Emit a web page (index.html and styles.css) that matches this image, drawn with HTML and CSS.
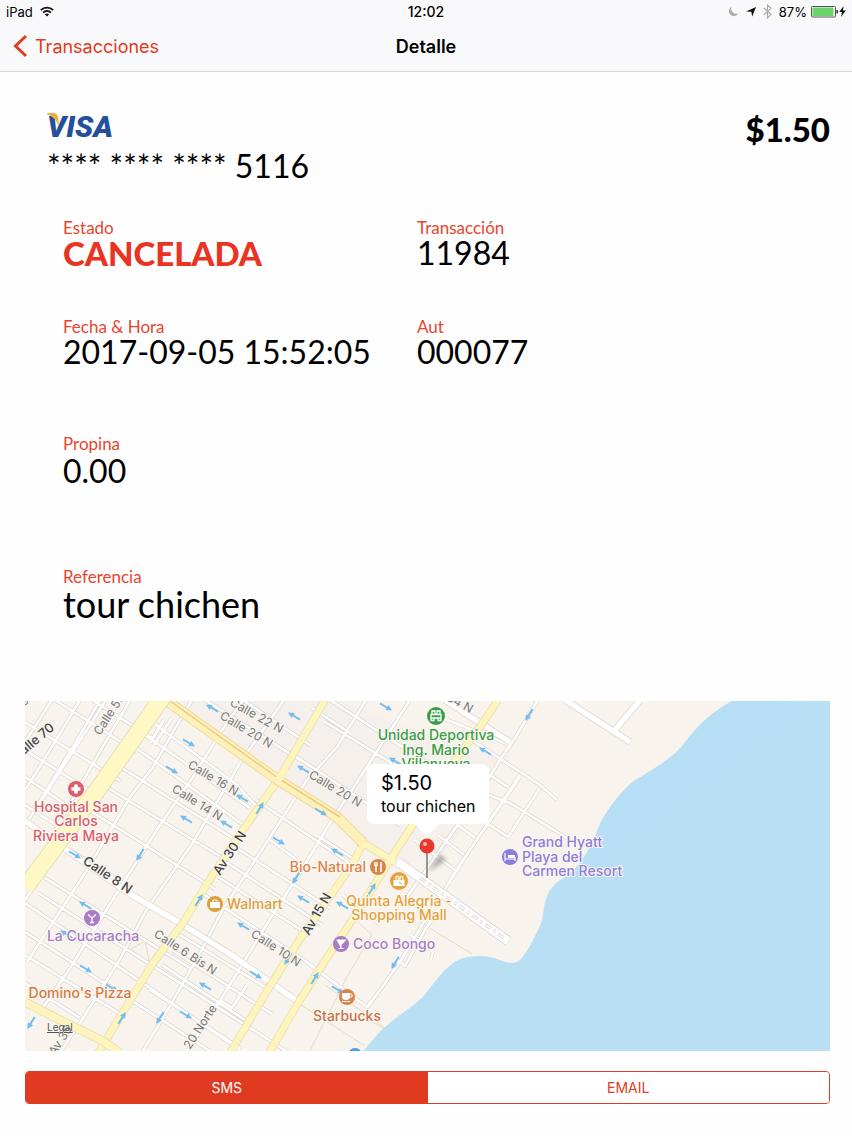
FILE: index.html
```html
<!DOCTYPE html>
<html lang="es">
<head>
<meta charset="utf-8">
<meta name="viewport" content="width=device-width, initial-scale=1">
<title>Detalle</title>
<link rel="stylesheet" href="styles.css">
</head>
<body>
<header class="top">
  <div class="status">
    <div class="status-left">
      <span>iPad</span>
      <svg width="14" height="11" viewBox="0 0 14 11" aria-hidden="true"><g fill="none" stroke="#111" stroke-width="1.8"><path d="M.8 4.2C4.300.700 9.700.700 13.200 4.200"/><path d="M3.100 6.600C5.400 4.400 8.600 4.400 10.900 6.600"/></g><path d="M4.800 8.300C6.200 7.100 7.800 7.100 9.200 8.300L7 10.600Z" fill="#111"/></svg>
    </div>
    <span class="clock">12:02</span>
    <div class="status-right">
      <svg width="11" height="11" viewBox="0 0 11 11" aria-hidden="true"><path d="M3.500.800A5 5 0 1 0 10.300 7.600A5.300 5.300 0 0 1 3.500.800Z" fill="#aaa"/></svg>
      <svg class="gap-l" width="10" height="10" viewBox="0 0 10 10" aria-hidden="true"><path d="M10 0L6.200 9.600L5.300 4.800L0 4.400Z" fill="#111"/></svg>
      <svg class="gap-l" width="9" height="15" viewBox="0 0 9 15" aria-hidden="true"><path d="M.8 4L8 10.500L4.500 14V1L8 4.300L.8 11" fill="none" stroke="#aaa" stroke-width="1.100"/></svg>
      <span class="gap-l">87%</span>
      <svg class="gap-s" width="28" height="12" viewBox="0 0 28 12" aria-hidden="true"><rect x=".5" y=".5" width="24" height="10.500" rx="1" fill="#fff" stroke="#555"/><rect x="1.500" y="1.500" width="21" height="8.500" fill="#6bd56b"/><path d="M25.500 4H26.500Q27.500 5.800 26.500 7.500H25.500Z" fill="#111"/></svg>
      <svg width="7" height="11" viewBox="0 0 7 11" aria-hidden="true"><path d="M4.600 0L.2 6H3L2 11L6.800 4.500H3.900Z" fill="#111"/></svg>
    </div>
  </div>
  <nav class="nav">
    <a class="back" href="#"><svg width="15" height="24" viewBox="0 0 15 24" aria-hidden="true"><path d="M13 2L2.500 12L13 22" fill="none" stroke="#e03c20" stroke-width="3"/></svg>Transacciones</a>
    <h1 class="title">Detalle</h1>
  </nav>
</header>

<main class="page">
  <section class="payment">
    <div>
      <svg class="visa" width="72" height="32" viewBox="0 0 72 32" role="img" aria-label="VISA"><text class="visa-text" x="0" y="27">VISA</text><path d="M0 3H6Q10 3 11 7L12 16Q8 7 0 4Z" fill="#efad3b"/></svg>
      <p class="card-number">**** **** **** 5116</p>
    </div>
    <p class="amount">$1.50</p>
  </section>

  <dl class="details">
    <div><dt>Estado</dt><dd class="cancelled">CANCELADA</dd></div>
    <div><dt>Transacción</dt><dd>11984</dd></div>
    <div><dt>Fecha &amp; Hora</dt><dd>2017-09-05 15:52:05</dd></div>
    <div><dt>Aut</dt><dd>000077</dd></div>
    <div class="wide"><dt>Propina</dt><dd>0.00</dd></div>
    <div class="wide"><dt>Referencia</dt><dd class="reference">tour chichen</dd></div>
  </dl>

  <svg class="map" viewBox="25 701 805 350" preserveAspectRatio="xMidYMid slice" role="img" aria-label="Mapa de Playa del Carmen">
    <defs>
      <linearGradient id="sea" x1="0" y1="0" x2="1" y2="1"><stop offset="0" stop-color="#a9dbf3"/><stop offset=".5" stop-color="#b9dff5"/></linearGradient>
      <filter id="soft" x="-50%" y="-50%" width="200%" height="200%"><feGaussianBlur stdDeviation="2"/></filter>
      <path id="streets" d="
        M27 823L83 730L100 700 M25 790L50 750L80 700 M55 830L95 760L130 700 M38 806L106 700 M25 742L52 700
        M27 962L87 870L130 797L153 767L180 720L192 700
        M40 1012L70 968L120 888L160 825L193 777L220 733L243 700
        M63 1048L80 1023L120 959L147 909L190 847L220 797L240 763L284 700
        M154 745L172 718
        M143 1051L170 1006L200 953L223 909L250 868L307 780L337 747L366 700
        M187 1051L223 996L270 919L297 877L330 823L367 767L410 700
        M220 1000L232 1008L247 985
        M25 900L45 870
        M25 722L120 781 M25 750L103 799 M25 777L88 820 M25 805L72 835 M55 700L137 752 M92 700L152 738
        M152 722L236 784L258 808 M145 735L250 808 M136 748L245 826 M122 768L236 840 M108 788L226 860
        M150 743L164 720 M92 812L215 889 M70 850L128 886 M45 878L190 968 M38 893L172 978 L300 1060
        M25 903L150 988L240 1050 M25 932L140 1006L210 1051 M25 955L125 1017 M25 983L80 1018
        M165 700L195 718 M205 700L300 760 M243 700L310 745 M325 722L435 790 M330 700L430 765 M292 754L400 825
        M312 708L350 733 M256 800L354 866 M232 845L330 908 M226 862L322 925 M218 877L309 935
        M200 892L304 960L367 1007 M180 935L270 990 M172 950L250 1000L272 1014 M162 965L245 1020 M150 990L240 1048
        M270 840L297 860 M318 836L360 863 M343 895L380 925
        M367 1008L400 962L425 920L470 850L520 775 M310 965L367 1007L371 1001
        M395 958L405 966L425 930L433 918 M410 935L433 952L431 959
        M538 700L515 738L500 760L475 800L440 850L405 900
        M520 777L463 860L450 880 M540 788L508 837L485 822 M440 717L510 745
        M472 740L540 785L557 800 M490 775L508 787 M480 792L510 803L570 840 M458 825L475 838 M438 835L464 855 M415 840L455 870"/>
      <path id="avenues" d="M25 821L130 894L180 923L230 954L300 1003 M445 700L480 723L510 742 M565 700L630 742 M615 730L640 700"/>
      <path id="pier" d="M398 862L508 941" />
      <path id="yellow" d="M325 700L278 780L245 827L212 876L183 923L153 963L98 1053 M363 843L352 865L300 939L270 986L230 1053 M498 700L480 727L453 763L390 860L353 919L330 953L298 1003L269 1053 M337 817L363 843L395 862"/>
      <path id="arrow" d="M-7 -1H1V-3L7 0L1 3V1H-7Z"/>
    </defs>
    <rect x="25" y="701" width="805" height="350" fill="#f8f4ed"/>
    <path d="M170 701L340 701L500 760L450 850L390 870L278 780Z" fill="#f5f0eb"/>
    <g fill="none" stroke-linejoin="round">
      <path d="M420 922L472 954 M355 919L372 935L348 975L310 1051 M325 985L395 1035L360 1015 M298 1003L365 1046 M124 953L145 941L150 965" stroke="#e3dbc5" stroke-width="1"/>
      <use href="#streets" stroke="#dcd6d0" stroke-width="4"/>
      <use href="#streets" stroke="#fff" stroke-width="2.500"/>
      <use href="#avenues" stroke="#dcd6d0" stroke-width="7"/>
      <use href="#avenues" stroke="#fff" stroke-width="5.500"/>
      <use href="#pier" stroke="#d2cdc8" stroke-width="10"/>
      <use href="#pier" stroke="#fff" stroke-width="8.500"/>
      <path d="M420 878L504 938" stroke="#d2cdc8" stroke-width="3" stroke-dasharray="7 3 3 3"/>
      <path d="M420 878L504 938" stroke="#fff" stroke-width="1.500" stroke-dasharray="7 3 3 3"/>
      <use href="#yellow" stroke="#e8dcae" stroke-width="8"/>
      <use href="#yellow" stroke="#fdf5bd" stroke-width="6.500"/>
      <path d="M25 1002L60 1020L103 1041L120 1053" stroke="#e8dcae" stroke-width="9"/>
      <path d="M25 1002L60 1020L103 1041L120 1053" stroke="#fdf5bd" stroke-width="7.500"/>
      <path d="M167 701L278 780L337 817L363 843" stroke="#efd9a7" stroke-width="11"/>
      <path d="M167 701L278 780L337 817L363 843" stroke="#fcf1b8" stroke-width="9"/>
      <path d="M170 701L278 778L340 817" stroke="#f1c984" stroke-width="1.500"/>
      <path d="M164 695L101 785L25 888" stroke="#e8dfb4" stroke-width="18"/>
      <path d="M164 695L101 785L25 888" stroke="#fdf8c4" stroke-width="16"/>
      <path d="M278 780L286 768" stroke="#fdf5bd" stroke-width="7"/>
    </g>
    <path d="M732 701C710 713 698 725 682 746C665 765 642 774 629 785C613 800 600 820 596 834C590 850 578 868 565 877C556 882 549 889 547 897C543 905 544 915 541 923C535 938 526 953 521 959C516 965 506 963 500 960C489 955 475 955 463 958C446 964 437 980 423 997C410 1009 394 1018 384 1028C374 1037 369 1045 363 1051H830V701Z" fill="url(#sea)"/>
    <circle cx="355" cy="1055" r="7" fill="#4b9fe0"/>

    <g fill="#74bdee">
      <use href="#arrow" transform="translate(212 708) rotate(211)"/><use href="#arrow" transform="translate(189 743) rotate(31)"/><use href="#arrow" transform="translate(172 770) rotate(31)"/><use href="#arrow" transform="translate(186 819) rotate(211)"/><use href="#arrow" transform="translate(226 824) rotate(211)"/><use href="#arrow" transform="translate(140 855) rotate(122)"/><use href="#arrow" transform="translate(75 855) rotate(31)"/>
      <use href="#arrow" transform="translate(294 716) rotate(211)"/><use href="#arrow" transform="translate(386 707) rotate(31)"/><use href="#arrow" transform="translate(303 769) rotate(211)"/><use href="#arrow" transform="translate(242 798) rotate(211)"/><use href="#arrow" transform="translate(260 808) rotate(-58)"/><use href="#arrow" transform="translate(321 812) rotate(31)"/><use href="#arrow" transform="translate(279 841) rotate(31)"/><use href="#arrow" transform="translate(337 852) rotate(211)"/><use href="#arrow" transform="translate(395 761) rotate(211)"/><use href="#arrow" transform="translate(529 715) rotate(122)"/><use href="#arrow" transform="translate(485 751) rotate(211)"/>
      <use href="#arrow" transform="translate(85 905) rotate(211)"/><use href="#arrow" transform="translate(66 934) rotate(211)"/><use href="#arrow" transform="translate(86 969) rotate(31)"/><use href="#arrow" transform="translate(112 988) rotate(31)"/><use href="#arrow" transform="translate(31 1023) rotate(122)"/><use href="#arrow" transform="translate(122 1018) rotate(-58)"/><use href="#arrow" transform="translate(199 900) rotate(-58)"/><use href="#arrow" transform="translate(205 986) rotate(211)"/><use href="#arrow" transform="translate(186 1015) rotate(31)"/><use href="#arrow" transform="translate(160 1018) rotate(122)"/>
      <use href="#arrow" transform="translate(303 899) rotate(211)"/><use href="#arrow" transform="translate(243 926) rotate(211)"/><use href="#arrow" transform="translate(342 905) rotate(211)"/><use href="#arrow" transform="translate(372 889) rotate(-58)"/><use href="#arrow" transform="translate(288 959) rotate(122)"/><use href="#arrow" transform="translate(315 978) rotate(-58)"/><use href="#arrow" transform="translate(256 975) rotate(31)"/><use href="#arrow" transform="translate(395 963) rotate(122)"/><use href="#arrow" transform="translate(338 990) rotate(31)"/><use href="#arrow" transform="translate(296 878) rotate(122)"/>
    </g>

    <g class="street">
      <text class="strong" transform="translate(24 755) rotate(-40)">alle 70</text>
      <text transform="translate(100 736) rotate(-57)">Calle 50</text>
      <text transform="translate(229 705) rotate(29)">Calle 22 N</text>
      <text transform="translate(219 718) rotate(31)">Calle 20 N</text>
      <text transform="translate(187 767) rotate(31)">Calle 16 N</text>
      <text transform="translate(171 791) rotate(32)">Calle 14 N</text>
      <text transform="translate(308 777) rotate(31)">Calle 20 N</text>
      <text transform="translate(446 700) rotate(29)">34 N</text>
      <text class="strong" transform="translate(82 863) rotate(34)">Calle 8 N</text>
      <text class="strong" transform="translate(220 876) rotate(-57)">Av 30 N</text>
      <text class="strong" transform="translate(309 936) rotate(-60)">Av 15 N</text>
      <text transform="translate(153 936) rotate(33)">Calle 6 Bis N</text>
      <text transform="translate(250 936) rotate(33)">Calle 10 N</text>
      <text transform="translate(190 1050) rotate(-57)">20 Norte</text>
      <text transform="translate(55 1056) rotate(-57)">Av 35</text>
      <text transform="translate(23 709) rotate(-50)">le</text>
    </g>

    <g class="poi">
      <g fill="#d95e6c"><circle cx="76" cy="789" r="8"/><path d="M74.300 784.500H77.700V787.300H80.500V790.700H77.700V793.500H74.300V790.700H71.500V787.300H74.300Z" fill="#fff"/><text class="mid" x="76" y="812">Hospital San</text><text class="mid" x="76" y="826">Carlos</text><text class="mid" x="76" y="841">Riviera Maya</text></g>
      <g fill="#3b9d48"><circle cx="436" cy="716" r="9"/><path d="M432 714V711H435V714M437 714V711H440V714M431 714.500H441V718H431ZM431 718V720.500H434V718M438 718V720.500H441V718" fill="none" stroke="#fff" stroke-width="1.300"/><text class="mid" x="436" y="740">Unidad Deportiva</text><text class="mid" x="436" y="755">Ing. Mario</text><text class="mid" x="436" y="769">Villanueva</text></g>
      <g fill="#d8854b"><circle cx="378" cy="867" r="8"/><path d="M375 862V866M377 862V866M376 865V872M381 862V872" fill="none" stroke="#fff" stroke-width="1.500"/><text class="end" x="366" y="872">Bio-Natural</text></g>
      <g fill="#e6a23c"><circle cx="399" cy="881" r="9"/><path d="M393.500 880H404.500V886H393.500Z" fill="#fff"/><path d="M396 880V878Q396 875 398.500 877V880M400 880V877Q403 875 403 880" fill="none" stroke="#fff" stroke-width="1.200"/><path d="M399 882L402 884" stroke="#e6a23c"/><text class="mid" x="399" y="906">Quinta Alegria -</text><text class="mid" x="399" y="920">Shopping Mall</text></g>
      <g fill="#dba03e"><circle cx="215" cy="904" r="8"/><path d="M210 902H220V908H210Z" fill="#fff"/><path d="M213 902V900H217V902" fill="none" stroke="#fff"/><text x="227" y="909">Walmart</text></g>
      <g fill="#a87cc7"><circle cx="92" cy="918" r="8"/><path d="M88 914.500L92 918L96 914.500M92 918V922.500M90 922.500H94" fill="none" stroke="#fff" stroke-width="1.300"/><text class="mid" x="93" y="941">La Cucaracha</text></g>
      <g fill="#a87cc7"><circle cx="341" cy="944" r="8"/><path d="M336.500 940H345.500L341 944.500V948M338.500 948.500H343.500" fill="#fff" stroke="#fff" stroke-width="1.100"/><text x="353" y="949">Coco Bongo</text></g>
      <g fill="#d9783c"><text class="mid" x="80" y="998">Domino's Pizza</text></g>
      <g fill="#d8854b"><circle cx="347" cy="997" r="8"/><path d="M342 993H350V997Q350 1000 346 1000Q342 1000 342 997ZM342 1001H350V1002H342Z" fill="#fff"/><path d="M350 994H352V997H350" fill="none" stroke="#fff"/><text class="mid" x="347" y="1021" fill="#cd7044">Starbucks</text></g>
      <g fill="#8f7bdc"><circle cx="510" cy="857" r="8"/><path d="M505 853V861M505 859H515V861M515 859V857" fill="none" stroke="#fff" stroke-width="1.200"/><path d="M508 855H515V858H508Z" fill="#fff"/><text x="522" y="847">Grand Hyatt</text><text x="522" y="862">Playa del</text><text x="522" y="876">Carmen Resort</text></g>
    </g>
    <text class="legal" x="47" y="1031">Legal</text>

    <path d="M428 872L440 854L446 860Z" fill="#777" opacity=".6" filter="url(#soft)"/>
    <path d="M427 850V878" stroke="#777" stroke-width="1.500"/>
    <path d="M375 764H481Q489 764 489 772V816Q489 824 481 824H441Q438 824 435 828L430 834Q427 837 424 834L419 828Q416 824 413 824H375Q367 824 367 816V772Q367 764 375 764Z" fill="#fff"/>
    <circle cx="427" cy="846" r="7.500" fill="#e8382f"/><circle cx="425" cy="844" r="2" fill="#f8b4ac"/>
    <text class="callout-title" x="381" y="790">$1.50</text>
    <text class="callout-text" x="381" y="812">tour chichen</text>
  </svg>

  <div class="segments">
    <button class="segment selected" type="button">SMS</button>
    <button class="segment" type="button">EMAIL</button>
  </div>
</main>
</body>
</html>
```

FILE: styles.css
```css
* { box-sizing: border-box; }
body {
  margin: 0;
  background: #fefefe;
  color: #000;
  font-family: Inter, "Liberation Sans", sans-serif;
}
h1, p, dl, dd { margin: 0; }
svg { display: block; }

.top {
  background: #f9f8fa;
  border-bottom: 1px solid #d5d5d7;
}
.status {
  display: grid;
  grid-template-columns: 1fr auto 1fr;
  align-items: center;
  height: 23px;
  padding: 0 6px;
  font-size: 13px;
}
.status-left, .status-right { display: flex; align-items: center; }
.status-left { gap: 7px; }
.status-right { justify-content: flex-end; }
.clock { font-size: 14px; font-weight: 500; }
.gap-l { margin-left: 7px; }
.gap-s { margin-left: 4px; }

.nav {
  display: grid;
  grid-template-columns: 1fr auto 1fr;
  align-items: center;
  height: 48px;
  padding: 0 13px 2px;
}
.back {
  display: flex;
  align-items: center;
  gap: 7px;
  color: #e03c20;
  font-size: 18px;
  text-decoration: none;
}
.title { font-size: 18px; font-weight: 600; }

.page { padding: 38px 22px 32px 25px; }
.payment {
  display: flex;
  justify-content: space-between;
  padding-left: 22px;
  font-family: Lato, sans-serif;
}
.visa-text {
  font: italic 900 30px Roboto, "Liberation Sans", sans-serif;
  fill: #234f9b;
}
.card-number {
  padding-top: 4px;
  font-size: 32px;
  line-height: 40px;
}
.amount {
  font-size: 33px;
  font-weight: 900;
  line-height: 38px;
}

.details {
  display: grid;
  grid-template-columns: 354fr 413fr;
  grid-template-rows: 99px 117px 133px 132px;
  padding: 34px 0 0 38px;
  font-family: Lato, sans-serif;
}
.wide { grid-column: 1 / -1; }
dt {
  color: #e8452e;
  font-size: 17px;
  line-height: 16px;
}
dd {
  font-size: 32px;
  line-height: 34px;
}
.wide dd { padding-top: 2px; }
.cancelled { color: #ea3323; font-size: 33px; font-weight: 900; }
.reference { font-size: 36px; }

.map { width: 100%; height: auto; }
.street text {
  font-size: 12px;
  fill: #777;
  stroke: #f8f5f0;
  stroke-width: 2px;
  paint-order: stroke;
}
.street .strong { fill: #444; font-weight: 500; font-size: 13px; }
.poi text {
  font-size: 14px;
  font-weight: 500;
  stroke: #fbf8f3;
  stroke-width: 2px;
  paint-order: stroke;
}
.poi .mid { text-anchor: middle; }
.poi .end { text-anchor: end; }
.legal { font-size: 10px; fill: #555; text-decoration: underline; }
.callout-title { font-size: 20px; }
.callout-text { font-size: 16px; }

.segments {
  display: grid;
  grid-template-columns: 1fr 1fr;
  margin-top: 20px;
  border: 1px solid #e03c20;
  border-radius: 4px;
  overflow: hidden;
}
.segment {
  height: 31px;
  padding: 0;
  border: 0;
  background: #fff;
  color: #e03c20;
  font: 14px Inter, sans-serif;
}
.segment.selected { background: #e03a21; color: #fff; }
```
